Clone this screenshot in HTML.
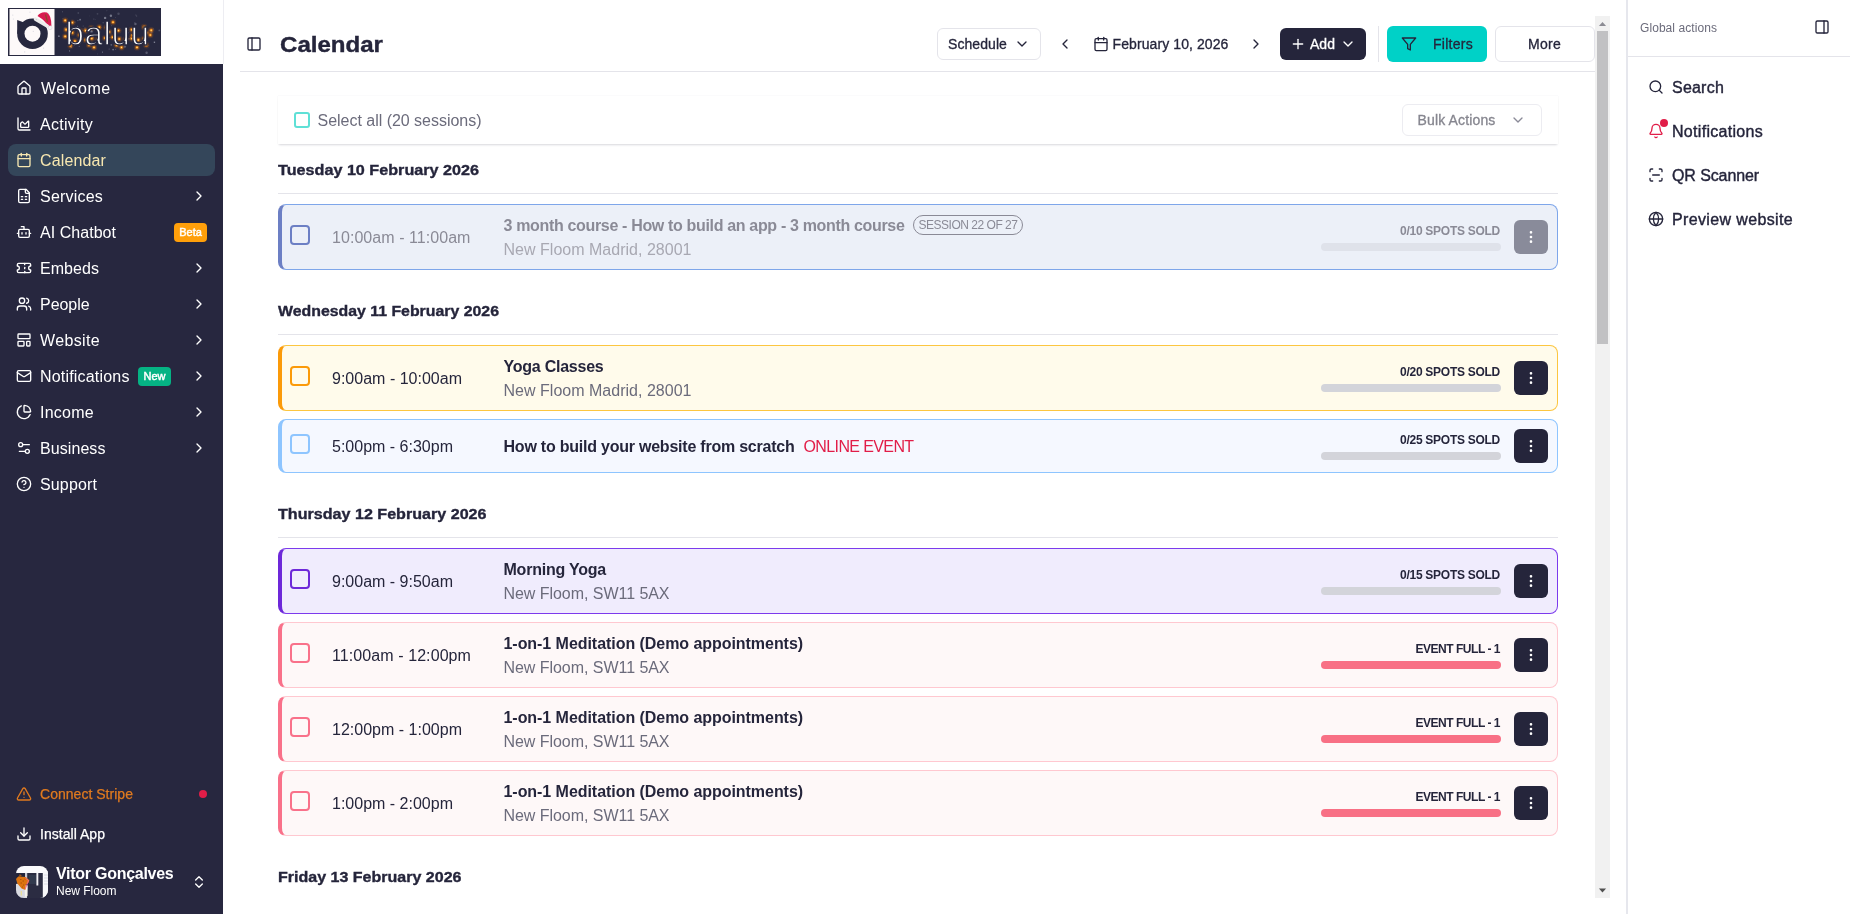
<!DOCTYPE html>
<html lang="en"><head><meta charset="utf-8"><title>Calendar</title>
<style>
html,body{margin:0;padding:0;background:#fff;}
body{width:1850px;height:914px;position:relative;overflow:hidden;font-family:"Liberation Sans", sans-serif;-webkit-font-smoothing:antialiased;}
#app{position:absolute;left:0;top:0;width:1850px;height:914px;will-change:transform;}
.b,.t,.i{position:absolute;box-sizing:border-box;}
.t{white-space:pre;}
.i{display:block;overflow:visible;}
</style></head><body>
<div id="app">
<div class="b" style="left:0px;top:64px;width:223px;height:850px;background:#27273f;"></div>
<div class="b" style="left:223px;top:0px;width:1px;height:64px;background:#ededf2;"></div>
<svg class="i" style="left:8px;top:8px" width="153" height="48" viewBox="0 0 153 48"><rect x="0" y="0" width="153" height="48" fill="#27283f"/><rect x="1.5" y="1" width="45" height="46" fill="#fdf9f9"/><path d="M9.2 12 L9.2 25.7 L24.5 25.7 L16 14.5Z" fill="#27283f"/><circle cx="24.5" cy="25.7" r="15.3" fill="#27283f"/><circle cx="24.5" cy="25.7" r="8" fill="#fdf9f9"/><path d="M29.5 8 Q33 3.2 39 4.6 Q43.5 7.5 43.4 18 L40.5 19 Q38 13 29.5 8Z" fill="#d81b50"/><path d="M37.5 6.5 L39.5 14" stroke="#8a4a2a" stroke-width="1.2" fill="none"/><path d="M27.6 11.2 L39.2 18" stroke="#ececec" stroke-width="3.6" stroke-linecap="round" fill="none"/><circle cx="42.1" cy="19.7" r="2" fill="#f6f6f6" stroke="#cfcfd6" stroke-width=".5"/><circle cx="81.7" cy="7.9" r="0.4" fill="#cfd3e0" opacity="0.18"/><circle cx="103.7" cy="17.8" r="0.4" fill="#cfd3e0" opacity="0.47"/><circle cx="70.3" cy="5.0" r="0.9" fill="#cfd3e0" opacity="0.17"/><circle cx="57.4" cy="20.5" r="1.2" fill="#cfd3e0" opacity="0.19"/><circle cx="71.2" cy="29.9" r="0.4" fill="#cfd3e0" opacity="0.35"/><circle cx="89.3" cy="45.9" r="0.4" fill="#cfd3e0" opacity="0.34"/><circle cx="61.9" cy="20.3" r="1.2" fill="#cfd3e0" opacity="0.19"/><circle cx="80.1" cy="38.5" r="0.5" fill="#cfd3e0" opacity="0.19"/><circle cx="107.4" cy="9.6" r="0.4" fill="#cfd3e0" opacity="0.34"/><circle cx="54.5" cy="3.7" r="0.5" fill="#cfd3e0" opacity="0.32"/><circle cx="103.3" cy="36.8" r="0.9" fill="#cfd3e0" opacity="0.35"/><circle cx="95.1" cy="14.8" r="0.5" fill="#cfd3e0" opacity="0.39"/><circle cx="73.4" cy="27.4" r="1.2" fill="#cfd3e0" opacity="0.32"/><circle cx="83.7" cy="21.6" r="1.2" fill="#cfd3e0" opacity="0.49"/><circle cx="60.3" cy="20.2" r="0.6" fill="#cfd3e0" opacity="0.20"/><circle cx="98.9" cy="2.8" r="0.4" fill="#cfd3e0" opacity="0.42"/><circle cx="107.6" cy="41.3" r="0.6" fill="#cfd3e0" opacity="0.27"/><circle cx="84.4" cy="23.8" r="0.9" fill="#cfd3e0" opacity="0.17"/><circle cx="57.7" cy="13.4" r="0.4" fill="#cfd3e0" opacity="0.17"/><circle cx="121.0" cy="30.8" r="0.9" fill="#cfd3e0" opacity="0.25"/><circle cx="88.1" cy="31.8" r="0.4" fill="#cfd3e0" opacity="0.48"/><circle cx="85.0" cy="29.1" r="0.9" fill="#cfd3e0" opacity="0.17"/><circle cx="127.9" cy="6.9" r="0.5" fill="#cfd3e0" opacity="0.29"/><circle cx="143.3" cy="23.8" r="0.5" fill="#cfd3e0" opacity="0.31"/><circle cx="105.1" cy="41.6" r="0.9" fill="#cfd3e0" opacity="0.45"/><circle cx="77.0" cy="20.1" r="0.6" fill="#cfd3e0" opacity="0.39"/><circle cx="87.6" cy="11.6" r="0.4" fill="#cfd3e0" opacity="0.21"/><circle cx="72.1" cy="11.7" r="0.9" fill="#cfd3e0" opacity="0.44"/><circle cx="67.0" cy="14.0" r="0.5" fill="#cfd3e0" opacity="0.30"/><circle cx="86.4" cy="27.1" r="0.5" fill="#cfd3e0" opacity="0.39"/><circle cx="101.6" cy="29.4" r="0.4" fill="#cfd3e0" opacity="0.31"/><circle cx="138.6" cy="44.8" r="1.2" fill="#cfd3e0" opacity="0.29"/><circle cx="89.5" cy="5.8" r="0.9" fill="#cfd3e0" opacity="0.17"/><circle cx="55.0" cy="10.6" r="0.5" fill="#cfd3e0" opacity="0.19"/><circle cx="110.5" cy="5.7" r="1.2" fill="#cfd3e0" opacity="0.20"/><circle cx="58.6" cy="17.7" r="0.4" fill="#cfd3e0" opacity="0.17"/><circle cx="69.6" cy="18.3" r="0.6" fill="#cfd3e0" opacity="0.48"/><circle cx="110.6" cy="22.8" r="0.4" fill="#cfd3e0" opacity="0.45"/><circle cx="151.3" cy="22.4" r="0.9" fill="#cfd3e0" opacity="0.26"/><circle cx="63.0" cy="35.5" r="0.6" fill="#cfd3e0" opacity="0.32"/><circle cx="120.0" cy="24.8" r="0.5" fill="#cfd3e0" opacity="0.48"/><circle cx="102.9" cy="7.7" r="1.2" fill="#cfd3e0" opacity="0.47"/><circle cx="126.8" cy="14.7" r="0.4" fill="#cfd3e0" opacity="0.39"/><circle cx="75.2" cy="17.9" r="0.5" fill="#cfd3e0" opacity="0.27"/><circle cx="71.2" cy="25.9" r="1.2" fill="#cfd3e0" opacity="0.27"/><circle cx="71.2" cy="38.3" r="0.5" fill="#cfd3e0" opacity="0.43"/><circle cx="133.1" cy="35.0" r="0.5" fill="#cfd3e0" opacity="0.22"/><circle cx="99.2" cy="34.6" r="0.4" fill="#cfd3e0" opacity="0.43"/><circle cx="97.1" cy="9.9" r="1.2" fill="#cfd3e0" opacity="0.48"/><circle cx="94.5" cy="44.1" r="0.6" fill="#cfd3e0" opacity="0.48"/><circle cx="85.9" cy="11.1" r="0.5" fill="#cfd3e0" opacity="0.31"/><circle cx="83.1" cy="23.2" r="1.2" fill="#cfd3e0" opacity="0.44"/><circle cx="97.9" cy="31.0" r="0.4" fill="#cfd3e0" opacity="0.44"/><circle cx="60.5" cy="18.9" r="0.5" fill="#cfd3e0" opacity="0.32"/><circle cx="66.6" cy="37.3" r="0.6" fill="#cfd3e0" opacity="0.18"/><circle cx="146.4" cy="34.2" r="0.9" fill="#cfd3e0" opacity="0.29"/><circle cx="146.5" cy="34.3" r="0.5" fill="#cfd3e0" opacity="0.50"/><circle cx="50.9" cy="28.2" r="0.9" fill="#cfd3e0" opacity="0.43"/><circle cx="63.2" cy="39.0" r="0.9" fill="#cfd3e0" opacity="0.38"/><circle cx="84.4" cy="26.2" r="0.5" fill="#cfd3e0" opacity="0.16"/><circle cx="131.1" cy="34.4" r="0.4" fill="#cfd3e0" opacity="0.33"/><circle cx="145.1" cy="21.0" r="0.5" fill="#cfd3e0" opacity="0.44"/><circle cx="69.9" cy="12.6" r="0.6" fill="#cfd3e0" opacity="0.33"/><circle cx="127.4" cy="16.0" r="1.2" fill="#cfd3e0" opacity="0.30"/><circle cx="61.6" cy="42.9" r="0.6" fill="#cfd3e0" opacity="0.46"/><circle cx="116.9" cy="38.5" r="1.2" fill="#cfd3e0" opacity="0.30"/><circle cx="143.4" cy="24.1" r="1.2" fill="#cfd3e0" opacity="0.20"/><circle cx="101.1" cy="41.1" r="0.5" fill="#cfd3e0" opacity="0.36"/><circle cx="128.7" cy="7.9" r="0.5" fill="#cfd3e0" opacity="0.32"/><circle cx="123.4" cy="26.6" r="0.6" fill="#cfd3e0" opacity="0.39"/><circle cx="25.3" cy="23.3" r=".6" fill="#b8bccb" opacity=".5"/><circle cx="35.6" cy="40.1" r=".6" fill="#b8bccb" opacity=".5"/><circle cx="5.4" cy="11.0" r=".6" fill="#b8bccb" opacity=".5"/><circle cx="4.8" cy="7.1" r=".6" fill="#b8bccb" opacity=".5"/><circle cx="22.0" cy="4.2" r=".6" fill="#b8bccb" opacity=".5"/><circle cx="40.5" cy="5.7" r=".6" fill="#b8bccb" opacity=".5"/><circle cx="16.7" cy="43.9" r=".6" fill="#b8bccb" opacity=".5"/><circle cx="28.5" cy="11.4" r=".6" fill="#b8bccb" opacity=".5"/><circle cx="57.2" cy="12.4" r="3.2" fill="#e8790c" opacity=".16"/><circle cx="57.2" cy="12.4" r="2" fill="#e8790c" opacity=".55"/><circle cx="57.2" cy="12.4" r="1.1" fill="#ff9d1e"/><circle cx="57.2" cy="12.4" r=".55" fill="#ffe7a3"/><circle cx="64.3" cy="14.6" r="3.2" fill="#e8790c" opacity=".16"/><circle cx="64.3" cy="14.6" r="2" fill="#e8790c" opacity=".55"/><circle cx="64.3" cy="14.6" r="1.1" fill="#ff9d1e"/><circle cx="64.3" cy="14.6" r=".55" fill="#ffe7a3"/><circle cx="58.1" cy="21.7" r="3.2" fill="#e8790c" opacity=".16"/><circle cx="58.1" cy="21.7" r="2" fill="#e8790c" opacity=".55"/><circle cx="58.1" cy="21.7" r="1.1" fill="#ff9d1e"/><circle cx="58.1" cy="21.7" r=".55" fill="#ffe7a3"/><circle cx="64.3" cy="24.8" r="3.2" fill="#e8790c" opacity=".16"/><circle cx="64.3" cy="24.8" r="2" fill="#e8790c" opacity=".55"/><circle cx="64.3" cy="24.8" r="1.1" fill="#ff9d1e"/><circle cx="64.3" cy="24.8" r=".55" fill="#ffe7a3"/><circle cx="57.2" cy="28.4" r="3.2" fill="#e8790c" opacity=".16"/><circle cx="57.2" cy="28.4" r="2" fill="#e8790c" opacity=".55"/><circle cx="57.2" cy="28.4" r="1.1" fill="#ff9d1e"/><circle cx="57.2" cy="28.4" r=".55" fill="#ffe7a3"/><circle cx="66.9" cy="33.2" r="3.2" fill="#e8790c" opacity=".16"/><circle cx="66.9" cy="33.2" r="2" fill="#e8790c" opacity=".55"/><circle cx="66.9" cy="33.2" r="1.1" fill="#ff9d1e"/><circle cx="66.9" cy="33.2" r=".55" fill="#ffe7a3"/><circle cx="62.5" cy="37.7" r="3.2" fill="#e8790c" opacity=".16"/><circle cx="62.5" cy="37.7" r="2" fill="#e8790c" opacity=".55"/><circle cx="62.5" cy="37.7" r="1.1" fill="#ff9d1e"/><circle cx="62.5" cy="37.7" r=".55" fill="#ffe7a3"/><circle cx="71.4" cy="27.0" r="3.2" fill="#e8790c" opacity=".16"/><circle cx="71.4" cy="27.0" r="2" fill="#e8790c" opacity=".55"/><circle cx="71.4" cy="27.0" r="1.1" fill="#ff9d1e"/><circle cx="71.4" cy="27.0" r=".55" fill="#ffe7a3"/><circle cx="77.6" cy="22.6" r="3.2" fill="#e8790c" opacity=".16"/><circle cx="77.6" cy="22.6" r="2" fill="#e8790c" opacity=".55"/><circle cx="77.6" cy="22.6" r="1.1" fill="#ff9d1e"/><circle cx="77.6" cy="22.6" r=".55" fill="#ffe7a3"/><circle cx="83.3" cy="19.9" r="3.2" fill="#e8790c" opacity=".16"/><circle cx="83.3" cy="19.9" r="2" fill="#e8790c" opacity=".55"/><circle cx="83.3" cy="19.9" r="1.1" fill="#ff9d1e"/><circle cx="83.3" cy="19.9" r=".55" fill="#ffe7a3"/><circle cx="91.3" cy="19.2" r="3.2" fill="#e8790c" opacity=".16"/><circle cx="91.3" cy="19.2" r="2" fill="#e8790c" opacity=".55"/><circle cx="91.3" cy="19.2" r="1.1" fill="#ff9d1e"/><circle cx="91.3" cy="19.2" r=".55" fill="#ffe7a3"/><circle cx="98.4" cy="19.5" r="3.2" fill="#e8790c" opacity=".16"/><circle cx="98.4" cy="19.5" r="2" fill="#e8790c" opacity=".55"/><circle cx="98.4" cy="19.5" r="1.1" fill="#ff9d1e"/><circle cx="98.4" cy="19.5" r=".55" fill="#ffe7a3"/><circle cx="105.0" cy="14.2" r="3.2" fill="#e8790c" opacity=".16"/><circle cx="105.0" cy="14.2" r="2" fill="#e8790c" opacity=".55"/><circle cx="105.0" cy="14.2" r="1.1" fill="#ff9d1e"/><circle cx="105.0" cy="14.2" r=".55" fill="#ffe7a3"/><circle cx="101.1" cy="23.9" r="3.2" fill="#e8790c" opacity=".16"/><circle cx="101.1" cy="23.9" r="2" fill="#e8790c" opacity=".55"/><circle cx="101.1" cy="23.9" r="1.1" fill="#ff9d1e"/><circle cx="101.1" cy="23.9" r=".55" fill="#ffe7a3"/><circle cx="104.6" cy="29.2" r="3.2" fill="#e8790c" opacity=".16"/><circle cx="104.6" cy="29.2" r="2" fill="#e8790c" opacity=".55"/><circle cx="104.6" cy="29.2" r="1.1" fill="#ff9d1e"/><circle cx="104.6" cy="29.2" r=".55" fill="#ffe7a3"/><circle cx="97.1" cy="30.1" r="3.2" fill="#e8790c" opacity=".16"/><circle cx="97.1" cy="30.1" r="2" fill="#e8790c" opacity=".55"/><circle cx="97.1" cy="30.1" r="1.1" fill="#ff9d1e"/><circle cx="97.1" cy="30.1" r=".55" fill="#ffe7a3"/><circle cx="83.8" cy="30.6" r="3.2" fill="#e8790c" opacity=".16"/><circle cx="83.8" cy="30.6" r="2" fill="#e8790c" opacity=".55"/><circle cx="83.8" cy="30.6" r="1.1" fill="#ff9d1e"/><circle cx="83.8" cy="30.6" r=".55" fill="#ffe7a3"/><circle cx="90.0" cy="31.5" r="3.2" fill="#e8790c" opacity=".16"/><circle cx="90.0" cy="31.5" r="2" fill="#e8790c" opacity=".55"/><circle cx="90.0" cy="31.5" r="1.1" fill="#ff9d1e"/><circle cx="90.0" cy="31.5" r=".55" fill="#ffe7a3"/><circle cx="77.6" cy="31.9" r="3.2" fill="#e8790c" opacity=".16"/><circle cx="77.6" cy="31.9" r="2" fill="#e8790c" opacity=".55"/><circle cx="77.6" cy="31.9" r="1.1" fill="#ff9d1e"/><circle cx="77.6" cy="31.9" r=".55" fill="#ffe7a3"/><circle cx="81.1" cy="37.0" r="3.2" fill="#e8790c" opacity=".16"/><circle cx="81.1" cy="37.0" r="2" fill="#e8790c" opacity=".55"/><circle cx="81.1" cy="37.0" r="1.1" fill="#ff9d1e"/><circle cx="81.1" cy="37.0" r=".55" fill="#ffe7a3"/><circle cx="86.0" cy="39.4" r="3.2" fill="#e8790c" opacity=".16"/><circle cx="86.0" cy="39.4" r="2" fill="#e8790c" opacity=".55"/><circle cx="86.0" cy="39.4" r="1.1" fill="#ff9d1e"/><circle cx="86.0" cy="39.4" r=".55" fill="#ffe7a3"/><circle cx="111.2" cy="31.0" r="3.2" fill="#e8790c" opacity=".16"/><circle cx="111.2" cy="31.0" r="2" fill="#e8790c" opacity=".55"/><circle cx="111.2" cy="31.0" r="1.1" fill="#ff9d1e"/><circle cx="111.2" cy="31.0" r=".55" fill="#ffe7a3"/><circle cx="113.5" cy="39.4" r="3.2" fill="#e8790c" opacity=".16"/><circle cx="113.5" cy="39.4" r="2" fill="#e8790c" opacity=".55"/><circle cx="113.5" cy="39.4" r="1.1" fill="#ff9d1e"/><circle cx="113.5" cy="39.4" r=".55" fill="#ffe7a3"/><circle cx="123.7" cy="21.7" r="3.2" fill="#e8790c" opacity=".16"/><circle cx="123.7" cy="21.7" r="2" fill="#e8790c" opacity=".55"/><circle cx="123.7" cy="21.7" r="1.1" fill="#ff9d1e"/><circle cx="123.7" cy="21.7" r=".55" fill="#ffe7a3"/><circle cx="124.5" cy="27.5" r="3.2" fill="#e8790c" opacity=".16"/><circle cx="124.5" cy="27.5" r="2" fill="#e8790c" opacity=".55"/><circle cx="124.5" cy="27.5" r="1.1" fill="#ff9d1e"/><circle cx="124.5" cy="27.5" r=".55" fill="#ffe7a3"/><circle cx="123.7" cy="30.6" r="3.2" fill="#e8790c" opacity=".16"/><circle cx="123.7" cy="30.6" r="2" fill="#e8790c" opacity=".55"/><circle cx="123.7" cy="30.6" r="1.1" fill="#ff9d1e"/><circle cx="123.7" cy="30.6" r=".55" fill="#ffe7a3"/><circle cx="130.3" cy="31.9" r="3.2" fill="#e8790c" opacity=".16"/><circle cx="130.3" cy="31.9" r="2" fill="#e8790c" opacity=".55"/><circle cx="130.3" cy="31.9" r="1.1" fill="#ff9d1e"/><circle cx="130.3" cy="31.9" r=".55" fill="#ffe7a3"/><circle cx="138.7" cy="24.8" r="3.2" fill="#e8790c" opacity=".16"/><circle cx="138.7" cy="24.8" r="2" fill="#e8790c" opacity=".55"/><circle cx="138.7" cy="24.8" r="1.1" fill="#ff9d1e"/><circle cx="138.7" cy="24.8" r=".55" fill="#ffe7a3"/><circle cx="143.2" cy="22.2" r="3.2" fill="#e8790c" opacity=".16"/><circle cx="143.2" cy="22.2" r="2" fill="#e8790c" opacity=".55"/><circle cx="143.2" cy="22.2" r="1.1" fill="#ff9d1e"/><circle cx="143.2" cy="22.2" r=".55" fill="#ffe7a3"/><circle cx="138.3" cy="37.2" r="3.2" fill="#e8790c" opacity=".16"/><circle cx="138.3" cy="37.2" r="2" fill="#e8790c" opacity=".55"/><circle cx="138.3" cy="37.2" r="1.1" fill="#ff9d1e"/><circle cx="138.3" cy="37.2" r=".55" fill="#ffe7a3"/><circle cx="129.0" cy="39.4" r="3.2" fill="#e8790c" opacity=".16"/><circle cx="129.0" cy="39.4" r="2" fill="#e8790c" opacity=".55"/><circle cx="129.0" cy="39.4" r="1.1" fill="#ff9d1e"/><circle cx="129.0" cy="39.4" r=".55" fill="#ffe7a3"/><circle cx="108.6" cy="37.2" r="3.2" fill="#e8790c" opacity=".16"/><circle cx="108.6" cy="37.2" r="2" fill="#e8790c" opacity=".55"/><circle cx="108.6" cy="37.2" r="1.1" fill="#ff9d1e"/><circle cx="108.6" cy="37.2" r=".55" fill="#ffe7a3"/><circle cx="136.1" cy="30.6" r="3.2" fill="#e8790c" opacity=".16"/><circle cx="136.1" cy="30.6" r="2" fill="#e8790c" opacity=".55"/><circle cx="136.1" cy="30.6" r="1.1" fill="#ff9d1e"/><circle cx="136.1" cy="30.6" r=".55" fill="#ffe7a3"/><circle cx="117.5" cy="31.5" r="3.2" fill="#e8790c" opacity=".16"/><circle cx="117.5" cy="31.5" r="2" fill="#e8790c" opacity=".55"/><circle cx="117.5" cy="31.5" r="1.1" fill="#ff9d1e"/><circle cx="117.5" cy="31.5" r=".55" fill="#ffe7a3"/><circle cx="142.3" cy="27.0" r="3.2" fill="#e8790c" opacity=".16"/><circle cx="142.3" cy="27.0" r="2" fill="#e8790c" opacity=".55"/><circle cx="142.3" cy="27.0" r="1.1" fill="#ff9d1e"/><circle cx="142.3" cy="27.0" r=".55" fill="#ffe7a3"/><circle cx="136.1" cy="19.0" r="3.2" fill="#e8790c" opacity=".16"/><circle cx="136.1" cy="19.0" r="2" fill="#e8790c" opacity=".55"/><circle cx="136.1" cy="19.0" r="1.1" fill="#ff9d1e"/><circle cx="136.1" cy="19.0" r=".55" fill="#ffe7a3"/><circle cx="110.4" cy="22.6" r="3.2" fill="#e8790c" opacity=".16"/><circle cx="110.4" cy="22.6" r="2" fill="#e8790c" opacity=".55"/><circle cx="110.4" cy="22.6" r="1.1" fill="#ff9d1e"/><circle cx="110.4" cy="22.6" r=".55" fill="#ffe7a3"/><circle cx="72.2" cy="22.6" r="3.2" fill="#e8790c" opacity=".16"/><circle cx="72.2" cy="22.6" r="2" fill="#e8790c" opacity=".55"/><circle cx="72.2" cy="22.6" r="1.1" fill="#ff9d1e"/><circle cx="72.2" cy="22.6" r=".55" fill="#ffe7a3"/><text x="57.4" y="37" font-family="Liberation Sans, sans-serif" font-size="33" letter-spacing="0.9" fill="#ffffff" stroke="#27283f" stroke-width="1.35" paint-order="fill" opacity="0.99" textLength="84.5" lengthAdjust="spacing">baluu</text></svg>
<svg class="i" style="left:16px;top:80px;color:#fff;" width="16" height="16" viewBox="0 0 24 24" fill="none" stroke="currentColor" stroke-width="2" stroke-linecap="round" stroke-linejoin="round"><path d="M15 21v-8a1 1 0 0 0-1-1h-4a1 1 0 0 0-1 1v8"/><path d="M3 10a2 2 0 0 1 .709-1.528l7-5.999a2 2 0 0 1 2.582 0l7 5.999A2 2 0 0 1 21 10v9a2 2 0 0 1-2 2H5a2 2 0 0 1-2-2z"/></svg>
<span class="t" style="left:41px;top:77.0px;line-height:24px;font-size:16px;font-weight:400;color:#fff;letter-spacing:0.444px;">Welcome</span>
<svg class="i" style="left:16px;top:116px;color:#fff;" width="16" height="16" viewBox="0 0 24 24" fill="none" stroke="currentColor" stroke-width="2" stroke-linecap="round" stroke-linejoin="round"><path d="M3 3v16a2 2 0 0 0 2 2h16"/><path d="M7 11.207a.5.5 0 0 1 .146-.353l2-2a.5.5 0 0 1 .708 0l3.292 3.292a.5.5 0 0 0 .708 0l4.292-4.292a.5.5 0 0 1 .854.353V16a1 1 0 0 1-1 1H8a1 1 0 0 1-1-1z"/></svg>
<span class="t" style="left:40px;top:113.0px;line-height:24px;font-size:16px;font-weight:400;color:#fff;letter-spacing:0.291px;">Activity</span>
<div class="b" style="left:8px;top:144px;width:207px;height:32px;background:#34465a;border-radius:8px;"></div>
<svg class="i" style="left:16px;top:152px;color:#f7e7b0;" width="16" height="16" viewBox="0 0 24 24" fill="none" stroke="currentColor" stroke-width="2" stroke-linecap="round" stroke-linejoin="round"><path d="M8 2v4"/><path d="M16 2v4"/><rect width="18" height="18" x="3" y="4" rx="2"/><path d="M3 10h18"/></svg>
<span class="t" style="left:40px;top:149.0px;line-height:24px;font-size:16px;font-weight:400;color:#f7e7b0;letter-spacing:0.133px;">Calendar</span>
<svg class="i" style="left:16px;top:188px;color:#fff;" width="16" height="16" viewBox="0 0 24 24" fill="none" stroke="currentColor" stroke-width="2" stroke-linecap="round" stroke-linejoin="round"><path d="M15 2H6a2 2 0 0 0-2 2v16a2 2 0 0 0 2 2h12a2 2 0 0 0 2-2V7Z"/><path d="M14 2v4a2 2 0 0 0 2 2h4"/><path d="M8 13h2"/><path d="M14 13h2"/><path d="M8 17h2"/><path d="M14 17h2"/></svg>
<span class="t" style="left:40px;top:185.0px;line-height:24px;font-size:16px;font-weight:400;color:#fff;letter-spacing:0.205px;">Services</span>
<svg class="i" style="left:191px;top:188px;color:#fff;" width="16" height="16" viewBox="0 0 24 24" fill="none" stroke="currentColor" stroke-width="2" stroke-linecap="round" stroke-linejoin="round"><path d="m9 18 6-6-6-6"/></svg>
<svg class="i" style="left:16px;top:224px;color:#fff;" width="16" height="16" viewBox="0 0 24 24" fill="none" stroke="currentColor" stroke-width="2" stroke-linecap="round" stroke-linejoin="round"><path d="M12 8V4H8"/><rect width="16" height="12" x="4" y="8" rx="2"/><path d="M2 14h2"/><path d="M20 14h2"/><path d="M15 13v2"/><path d="M9 13v2"/></svg>
<span class="t" style="left:40px;top:221.0px;line-height:24px;font-size:16px;font-weight:400;color:#fff;letter-spacing:0.039px;">AI Chatbot</span>
<svg class="i" style="left:16px;top:260px;color:#fff;" width="16" height="16" viewBox="0 0 24 24" fill="none" stroke="currentColor" stroke-width="2" stroke-linecap="round" stroke-linejoin="round"><path d="M2 9a3 3 0 0 1 0 6v2a2 2 0 0 0 2 2h16a2 2 0 0 0 2-2v-2a3 3 0 0 1 0-6V7a2 2 0 0 0-2-2H4a2 2 0 0 0-2 2Z"/><path d="M13 5v2"/><path d="M13 17v2"/><path d="M13 11v2"/></svg>
<span class="t" style="left:40px;top:257.0px;line-height:24px;font-size:16px;font-weight:400;color:#fff;letter-spacing:0.049px;">Embeds</span>
<svg class="i" style="left:191px;top:260px;color:#fff;" width="16" height="16" viewBox="0 0 24 24" fill="none" stroke="currentColor" stroke-width="2" stroke-linecap="round" stroke-linejoin="round"><path d="m9 18 6-6-6-6"/></svg>
<svg class="i" style="left:16px;top:296px;color:#fff;" width="16" height="16" viewBox="0 0 24 24" fill="none" stroke="currentColor" stroke-width="2" stroke-linecap="round" stroke-linejoin="round"><path d="M16 21v-2a4 4 0 0 0-4-4H6a4 4 0 0 0-4 4v2"/><circle cx="9" cy="7" r="4"/><path d="M22 21v-2a4 4 0 0 0-3-3.87"/><path d="M16 3.13a4 4 0 0 1 0 7.75"/></svg>
<span class="t" style="left:40px;top:293.0px;line-height:24px;font-size:16px;font-weight:400;color:#fff;letter-spacing:-0.038px;">People</span>
<svg class="i" style="left:191px;top:296px;color:#fff;" width="16" height="16" viewBox="0 0 24 24" fill="none" stroke="currentColor" stroke-width="2" stroke-linecap="round" stroke-linejoin="round"><path d="m9 18 6-6-6-6"/></svg>
<svg class="i" style="left:16px;top:332px;color:#fff;" width="16" height="16" viewBox="0 0 24 24" fill="none" stroke="currentColor" stroke-width="2" stroke-linecap="round" stroke-linejoin="round"><rect width="18" height="7" x="3" y="3" rx="1"/><rect width="9" height="7" x="3" y="14" rx="1"/><rect width="5" height="7" x="16" y="14" rx="1"/></svg>
<span class="t" style="left:40px;top:329.0px;line-height:24px;font-size:16px;font-weight:400;color:#fff;letter-spacing:0.355px;">Website</span>
<svg class="i" style="left:191px;top:332px;color:#fff;" width="16" height="16" viewBox="0 0 24 24" fill="none" stroke="currentColor" stroke-width="2" stroke-linecap="round" stroke-linejoin="round"><path d="m9 18 6-6-6-6"/></svg>
<svg class="i" style="left:16px;top:368px;color:#fff;" width="16" height="16" viewBox="0 0 24 24" fill="none" stroke="currentColor" stroke-width="2" stroke-linecap="round" stroke-linejoin="round"><rect width="20" height="16" x="2" y="4" rx="2"/><path d="m22 7-8.97 5.7a1.94 1.94 0 0 1-2.06 0L2 7"/></svg>
<span class="t" style="left:40px;top:365.0px;line-height:24px;font-size:16px;font-weight:400;color:#fff;letter-spacing:0.188px;">Notifications</span>
<svg class="i" style="left:191px;top:368px;color:#fff;" width="16" height="16" viewBox="0 0 24 24" fill="none" stroke="currentColor" stroke-width="2" stroke-linecap="round" stroke-linejoin="round"><path d="m9 18 6-6-6-6"/></svg>
<svg class="i" style="left:16px;top:404px;color:#fff;" width="16" height="16" viewBox="0 0 24 24" fill="none" stroke="currentColor" stroke-width="2" stroke-linecap="round" stroke-linejoin="round"><path d="M21 12c.552 0 1.005-.449.95-.998a10 10 0 0 0-8.953-8.951c-.55-.055-.998.398-.998.95v8a1 1 0 0 0 1 1z"/><path d="M21.21 15.89A10 10 0 1 1 8 2.83"/></svg>
<span class="t" style="left:40px;top:401.0px;line-height:24px;font-size:16px;font-weight:400;color:#fff;letter-spacing:0.255px;">Income</span>
<svg class="i" style="left:191px;top:404px;color:#fff;" width="16" height="16" viewBox="0 0 24 24" fill="none" stroke="currentColor" stroke-width="2" stroke-linecap="round" stroke-linejoin="round"><path d="m9 18 6-6-6-6"/></svg>
<svg class="i" style="left:16px;top:440px;color:#fff;" width="16" height="16" viewBox="0 0 24 24" fill="none" stroke="currentColor" stroke-width="2" stroke-linecap="round" stroke-linejoin="round"><path d="M20 7h-9"/><path d="M14 17H5"/><circle cx="17" cy="17" r="3"/><circle cx="7" cy="7" r="3"/></svg>
<span class="t" style="left:40px;top:437.0px;line-height:24px;font-size:16px;font-weight:400;color:#fff;letter-spacing:0.072px;">Business</span>
<svg class="i" style="left:191px;top:440px;color:#fff;" width="16" height="16" viewBox="0 0 24 24" fill="none" stroke="currentColor" stroke-width="2" stroke-linecap="round" stroke-linejoin="round"><path d="m9 18 6-6-6-6"/></svg>
<svg class="i" style="left:16px;top:476px;color:#fff;" width="16" height="16" viewBox="0 0 24 24" fill="none" stroke="currentColor" stroke-width="2" stroke-linecap="round" stroke-linejoin="round"><circle cx="12" cy="12" r="10"/><path d="M9.09 9a3 3 0 0 1 5.83 1c0 2-3 3-3 3"/><path d="M12 17h.01"/></svg>
<span class="t" style="left:40px;top:473.0px;line-height:24px;font-size:16px;font-weight:400;color:#fff;letter-spacing:0.136px;">Support</span>
<div class="b" style="left:174px;top:223px;width:33px;height:19px;background:#ff9f0a;border-radius:4px;"></div>
<span class="t" style="left:190.5px;top:223.0px;line-height:19px;font-size:11px;font-weight:400;color:#fff;letter-spacing:normal;transform:translateX(-50%);-webkit-text-stroke:0.45px currentColor;">Beta</span>
<div class="b" style="left:138px;top:367px;width:33px;height:19px;background:#05b384;border-radius:4px;"></div>
<span class="t" style="left:154.5px;top:367.0px;line-height:19px;font-size:11px;font-weight:400;color:#fff;letter-spacing:normal;transform:translateX(-50%);-webkit-text-stroke:0.45px currentColor;">New</span>
<svg class="i" style="left:16px;top:786px;color:#e07a1f;" width="16" height="16" viewBox="0 0 24 24" fill="none" stroke="currentColor" stroke-width="2" stroke-linecap="round" stroke-linejoin="round"><path d="m21.73 18-8-14a2 2 0 0 0-3.48 0l-8 14A2 2 0 0 0 4 21h16a2 2 0 0 0 1.73-3"/><path d="M12 9v4"/><path d="M12 17h.01"/></svg>
<span class="t" style="left:40px;top:783.5px;line-height:21px;font-size:14px;font-weight:400;color:#e07a1f;letter-spacing:0.028px;-webkit-text-stroke:0.25px currentColor;">Connect Stripe</span>
<div class="b" style="left:199px;top:790px;width:8px;height:8px;background:#e11d48;border-radius:50%;"></div>
<svg class="i" style="left:16px;top:826px;color:#fff;" width="16" height="16" viewBox="0 0 24 24" fill="none" stroke="currentColor" stroke-width="2" stroke-linecap="round" stroke-linejoin="round"><path d="M21 15v4a2 2 0 0 1-2 2H5a2 2 0 0 1-2-2v-4"/><path d="m7 10 5 5 5-5"/><path d="M12 15V3"/></svg>
<span class="t" style="left:40px;top:823.5px;line-height:21px;font-size:14px;font-weight:400;color:#fff;letter-spacing:0.036px;-webkit-text-stroke:0.25px currentColor;">Install App</span>
<svg class="i" style="left:16px;top:866px;border-radius:8px;overflow:hidden" width="32" height="32" viewBox="0 0 32 32"><rect width="32" height="32" fill="#fbfbfd"/><rect x="0" y="7" width="27" height="25" fill="#2b2c42"/><rect x="0" y="7.5" width="9" height="4" fill="#23243a"/><rect x="9" y="7" width="2.2" height="10" fill="#c9cad3"/><rect x="20.4" y="7" width="1.9" height="12.5" fill="#f1f1f5"/><rect x="13" y="9" width="7" height="9" fill="#323a4e"/><rect x="26.8" y="5" width="5.2" height="27" fill="#f7f7fa"/><path d="M28 9h4M28 12h4M28 15h4M28 18h4" stroke="#d4d6df" stroke-width=".8"/><path d="M0 18 L6 17 L11.5 20 L11 32 L0 32Z" fill="#d9dae1"/><path d="M8.5 20 L11.5 19 L11.5 30 L9 31Z" fill="#f7f4ea"/><path d="M2.2 10.6 L9.8 11 L13.4 14.2 L12.4 17 L9.8 18.6 L9.4 24 L5.6 22.4 L1.4 17.5 L0 13Z" fill="#dd7410"/><path d="M3 9.2h2v1M3 11h1.6" stroke="#dd7410" stroke-width=".8" fill="none"/><path d="M4 13.5h1.5M6.5 15h1.5M4.5 17h1.5M7 19h1.2M8.5 13h1.2M6 21h1" stroke="#a85208" stroke-width=".9"/><path d="M9.3 12 L12.5 14.5 L9.2 23" stroke="#f2688a" stroke-width="1" fill="none"/><rect x="4.8" y="25" width=".9" height="4.5" fill="#f3e27a"/></svg>
<span class="t" style="left:56px;top:864.0px;line-height:20px;font-size:16px;font-weight:700;color:#fff;letter-spacing:-0.269px;">Vitor Gonçalves</span>
<span class="t" style="left:56px;top:882.5px;line-height:16px;font-size:12px;font-weight:400;color:#fff;letter-spacing:-0.021px;">New Floom</span>
<svg class="i" style="left:191px;top:874px;color:#fff;" width="16" height="16" viewBox="0 0 24 24" fill="none" stroke="currentColor" stroke-width="2" stroke-linecap="round" stroke-linejoin="round"><path d="m7 15 5 5 5-5"/><path d="m7 9 5-5 5 5"/></svg>
<div class="b" style="left:240px;top:71px;width:1356px;height:1px;background:#e4e4ea;"></div>
<svg class="i" style="left:246px;top:36px;color:#25253b;" width="16" height="16" viewBox="0 0 24 24" fill="none" stroke="currentColor" stroke-width="2" stroke-linecap="round" stroke-linejoin="round"><rect width="18" height="18" x="3" y="3" rx="2"/><path d="M9 3v18"/></svg>
<span class="t" style="left:280px;top:29.3px;line-height:32px;font-size:22.5px;font-weight:700;color:#25253b;letter-spacing:normal;-webkit-text-stroke:0.4px currentColor;transform-origin:left center;transform:scaleX(1.0696);">Calendar</span>
<div class="b" style="left:937px;top:28px;width:104px;height:32px;border:1px solid #e4e4ea;border-radius:6px;background:#fff;"></div>
<span class="t" style="left:948px;top:33.5px;line-height:21px;font-size:14px;font-weight:400;color:#25253b;letter-spacing:0.076px;-webkit-text-stroke:0.3px currentColor;">Schedule</span>
<svg class="i" style="left:1014px;top:36px;color:#25253b;" width="16" height="16" viewBox="0 0 24 24" fill="none" stroke="currentColor" stroke-width="2" stroke-linecap="round" stroke-linejoin="round"><path d="m6 9 6 6 6-6"/></svg>
<svg class="i" style="left:1057px;top:36px;color:#25253b;" width="16" height="16" viewBox="0 0 24 24" fill="none" stroke="currentColor" stroke-width="2" stroke-linecap="round" stroke-linejoin="round"><path d="m15 18-6-6 6-6"/></svg>
<svg class="i" style="left:1093px;top:36px;color:#25253b;" width="16" height="16" viewBox="0 0 24 24" fill="none" stroke="currentColor" stroke-width="2" stroke-linecap="round" stroke-linejoin="round"><path d="M8 2v4"/><path d="M16 2v4"/><rect width="18" height="18" x="3" y="4" rx="2"/><path d="M3 10h18"/></svg>
<span class="t" style="left:1112.5px;top:33.5px;line-height:21px;font-size:14px;font-weight:400;color:#25253b;letter-spacing:0.094px;-webkit-text-stroke:0.3px currentColor;">February 10, 2026</span>
<svg class="i" style="left:1248px;top:36px;color:#25253b;" width="16" height="16" viewBox="0 0 24 24" fill="none" stroke="currentColor" stroke-width="2" stroke-linecap="round" stroke-linejoin="round"><path d="m9 18 6-6-6-6"/></svg>
<div class="b" style="left:1280px;top:28px;width:86px;height:32px;background:#25253b;border-radius:6px;"></div>
<svg class="i" style="left:1290px;top:36px;color:#fff;" width="16" height="16" viewBox="0 0 24 24" fill="none" stroke="currentColor" stroke-width="2" stroke-linecap="round" stroke-linejoin="round"><path d="M5 12h14"/><path d="M12 5v14"/></svg>
<span class="t" style="left:1310px;top:33.5px;line-height:21px;font-size:14px;font-weight:400;color:#fff;letter-spacing:0.026px;-webkit-text-stroke:0.3px currentColor;">Add</span>
<svg class="i" style="left:1340px;top:36px;color:#fff;" width="16" height="16" viewBox="0 0 24 24" fill="none" stroke="currentColor" stroke-width="2" stroke-linecap="round" stroke-linejoin="round"><path d="m6 9 6 6 6-6"/></svg>
<div class="b" style="left:1378px;top:26px;width:1px;height:36px;background:#e4e4ea;"></div>
<div class="b" style="left:1387px;top:26px;width:100px;height:36px;background:#00d1c7;border-radius:6px;"></div>
<svg class="i" style="left:1401px;top:36px;color:#25253b;" width="16" height="16" viewBox="0 0 24 24" fill="none" stroke="currentColor" stroke-width="2" stroke-linecap="round" stroke-linejoin="round"><path d="M22 3H2l8 9.46V19l4 2v-8.54z"/></svg>
<span class="t" style="left:1433px;top:33.5px;line-height:21px;font-size:14px;font-weight:400;color:#25253b;letter-spacing:0.268px;-webkit-text-stroke:0.3px currentColor;">Filters</span>
<div class="b" style="left:1495px;top:26px;width:100px;height:36px;border:1px solid #e4e4ea;border-radius:6px;background:#fff;"></div>
<span class="t" style="left:1528px;top:33.5px;line-height:21px;font-size:14px;font-weight:400;color:#25253b;letter-spacing:0.273px;-webkit-text-stroke:0.3px currentColor;">More</span>
<div class="b" style="left:1595px;top:16px;width:15px;height:882px;background:#f1f1f1;"></div>
<div class="b" style="left:1597px;top:31px;width:11px;height:313px;background:#c1c1c3;"></div>
<svg class="i" style="left:1595px;top:16px" width="15" height="15" viewBox="0 0 15 15"><path d="M3.9 10 L7.5 5.9 L11.1 10Z" fill="#8b8b93"/></svg>
<svg class="i" style="left:1595px;top:883px" width="15" height="15" viewBox="0 0 15 15"><path d="M3.9 5.5 L7.5 9.6 L11.1 5.5Z" fill="#505050"/></svg>
<div class="b" style="left:1626px;top:0px;width:2px;height:914px;background:#e6e7ed;"></div>
<div class="b" style="left:1628px;top:56px;width:222px;height:1px;background:#e4e4ea;"></div>
<span class="t" style="left:1640px;top:19.0px;line-height:18px;font-size:12px;font-weight:400;color:#6b6b7b;letter-spacing:0.068px;">Global actions</span>
<svg class="i" style="left:1814px;top:19px;color:#25253b;" width="16" height="16" viewBox="0 0 24 24" fill="none" stroke="currentColor" stroke-width="2" stroke-linecap="round" stroke-linejoin="round"><rect width="18" height="18" x="3" y="3" rx="2"/><path d="M15 3v18"/></svg>
<svg class="i" style="left:1648px;top:79px;color:#25253b;" width="16" height="16" viewBox="0 0 24 24" fill="none" stroke="currentColor" stroke-width="2" stroke-linecap="round" stroke-linejoin="round"><circle cx="11" cy="11" r="8"/><path d="m21 21-4.3-4.3"/></svg>
<span class="t" style="left:1672px;top:76.0px;line-height:24px;font-size:16px;font-weight:400;color:#25253b;letter-spacing:0.216px;-webkit-text-stroke:0.4px currentColor;">Search</span>
<svg class="i" style="left:1648px;top:123px;color:#e11d48;" width="16" height="16" viewBox="0 0 24 24" fill="none" stroke="currentColor" stroke-width="2" stroke-linecap="round" stroke-linejoin="round"><path d="M10.268 21a2 2 0 0 0 3.464 0"/><path d="M3.262 15.326A1 1 0 0 0 4 17h16a1 1 0 0 0 .74-1.673C19.41 13.956 18 12.499 18 8A6 6 0 0 0 6 8c0 4.499-1.411 5.956-2.738 7.326"/></svg>
<span class="t" style="left:1672px;top:120.0px;line-height:24px;font-size:16px;font-weight:400;color:#25253b;letter-spacing:0.296px;-webkit-text-stroke:0.4px currentColor;">Notifications</span>
<svg class="i" style="left:1648px;top:167px;color:#25253b;" width="16" height="16" viewBox="0 0 24 24" fill="none" stroke="currentColor" stroke-width="2" stroke-linecap="round" stroke-linejoin="round"><path d="M3 7V5a2 2 0 0 1 2-2h2"/><path d="M17 3h2a2 2 0 0 1 2 2v2"/><path d="M21 17v2a2 2 0 0 1-2 2h-2"/><path d="M7 21H5a2 2 0 0 1-2-2v-2"/><path d="M7 12h10"/></svg>
<span class="t" style="left:1672px;top:164.0px;line-height:24px;font-size:16px;font-weight:400;color:#25253b;letter-spacing:-0.105px;-webkit-text-stroke:0.4px currentColor;">QR Scanner</span>
<svg class="i" style="left:1648px;top:211px;color:#25253b;" width="16" height="16" viewBox="0 0 24 24" fill="none" stroke="currentColor" stroke-width="2" stroke-linecap="round" stroke-linejoin="round"><circle cx="12" cy="12" r="10"/><path d="M12 2a14.5 14.5 0 0 0 0 20 14.5 14.5 0 0 0 0-20"/><path d="M2 12h20"/></svg>
<span class="t" style="left:1672px;top:208.0px;line-height:24px;font-size:16px;font-weight:400;color:#25253b;letter-spacing:0.359px;-webkit-text-stroke:0.4px currentColor;">Preview website</span>
<div class="b" style="left:1660px;top:118.5px;width:8px;height:8px;background:#e11d48;border-radius:50%;"></div>
<div class="b" style="left:278px;top:96px;width:1280px;height:48px;background:#fff;box-shadow:0 2px 2px -1px rgba(30,30,60,.16),0 0 1px rgba(30,30,60,.10);"></div>
<div class="b" style="left:294px;top:112px;width:16px;height:16px;border:2px solid #5fe0d6;border-radius:3px;background:#fff;"></div>
<span class="t" style="left:317.5px;top:109.0px;line-height:24px;font-size:16px;font-weight:400;color:#6b6b7b;letter-spacing:-0.021px;">Select all (20 sessions)</span>
<div class="b" style="left:1402px;top:104px;width:139.5px;height:32px;border:1px solid #ececf1;border-radius:6px;background:#fff;"></div>
<span class="t" style="left:1417.5px;top:109.5px;line-height:21px;font-size:14px;font-weight:400;color:#86868f;letter-spacing:0.145px;-webkit-text-stroke:0.3px currentColor;">Bulk Actions</span>
<svg class="i" style="left:1510px;top:112px;color:#8a8a98;" width="16" height="16" viewBox="0 0 24 24" fill="none" stroke="currentColor" stroke-width="2" stroke-linecap="round" stroke-linejoin="round"><path d="m6 9 6 6 6-6"/></svg>
<span class="t" style="left:278px;top:158.1px;line-height:24px;font-size:15px;font-weight:700;color:#25253b;letter-spacing:normal;-webkit-text-stroke:0.35px currentColor;transform-origin:left center;transform:scaleX(1.0777);">Tuesday 10 February 2026</span>
<div class="b" style="left:278px;top:193px;width:1280px;height:1px;background:#e4e4ea;"></div>
<div class="b" style="left:278px;top:204px;width:1280px;height:66px;background:#ecf0f8;border:1px solid #7ea6ea;border-left:4px solid #6c7fc4;border-radius:8px;"></div>
<div class="b" style="left:290px;top:225.0px;width:20px;height:20px;border:2px solid #6c7fc4;border-radius:4px;"></div>
<span class="t" style="left:332px;top:225.5px;line-height:24px;font-size:16px;font-weight:400;color:#8a8a96;letter-spacing:0.055px;">10:00am - 11:00am</span>
<span class="t" style="left:503.5px;top:214.0px;line-height:24px;font-size:16px;font-weight:700;color:#8a8a96;letter-spacing:-0.334px;">3 month course - How to build an app - 3 month course</span>
<span class="t" style="left:503.5px;top:238.0px;line-height:24px;font-size:16px;font-weight:400;color:#a8a8b2;letter-spacing:0.016px;">New Floom Madrid, 28001</span>
<span class="t" style="right:350px;top:222.0px;line-height:18px;font-size:12px;font-weight:700;color:#8a8a96;letter-spacing:-0.270px;">0/10 SPOTS SOLD</span>
<div class="b" style="left:1321px;top:243.0px;width:180px;height:8px;background:#dfe2ea;border-radius:4px;"></div>
<div class="b" style="left:1514px;top:220.0px;width:34px;height:34px;background:#25253b;border-radius:6px;opacity:.5;"></div>
<svg class="i" style="left:1523px;top:229.0px;color:#fff;" width="16" height="16" viewBox="0 0 24 24" fill="none" stroke="currentColor" stroke-width="2" stroke-linecap="round" stroke-linejoin="round"><circle cx="12" cy="12" r="1"/><circle cx="12" cy="5" r="1"/><circle cx="12" cy="19" r="1"/></svg>
<div class="b" style="left:913px;top:215px;width:110px;height:20px;border:1px solid #8a8a96;border-radius:10px;"></div>
<span class="t" style="left:918.5px;top:215.0px;line-height:20px;font-size:12px;font-weight:400;color:#8a8a96;letter-spacing:-0.482px;">SESSION 22 OF 27</span>
<span class="t" style="left:278px;top:299.1px;line-height:24px;font-size:15px;font-weight:700;color:#25253b;letter-spacing:normal;-webkit-text-stroke:0.35px currentColor;transform-origin:left center;transform:scaleX(1.0573);">Wednesday 11 February 2026</span>
<div class="b" style="left:278px;top:334px;width:1280px;height:1px;background:#e4e4ea;"></div>
<div class="b" style="left:278px;top:345px;width:1280px;height:66px;background:#fffbeb;border:1px solid #fcc640;border-left:4px solid #fb9a09;border-radius:8px;"></div>
<div class="b" style="left:290px;top:366.0px;width:20px;height:20px;border:2px solid #fb9a09;border-radius:4px;"></div>
<span class="t" style="left:332px;top:366.5px;line-height:24px;font-size:16px;font-weight:400;color:#25253b;letter-spacing:0.009px;">9:00am - 10:00am</span>
<span class="t" style="left:503.5px;top:355.0px;line-height:24px;font-size:16px;font-weight:700;color:#25253b;letter-spacing:-0.240px;">Yoga Classes</span>
<span class="t" style="left:503.5px;top:379.0px;line-height:24px;font-size:16px;font-weight:400;color:#6b6b7b;letter-spacing:0.016px;">New Floom Madrid, 28001</span>
<span class="t" style="right:350px;top:363.0px;line-height:18px;font-size:12px;font-weight:700;color:#25253b;letter-spacing:-0.270px;">0/20 SPOTS SOLD</span>
<div class="b" style="left:1321px;top:384.0px;width:180px;height:8px;background:#d3d4da;border-radius:4px;"></div>
<div class="b" style="left:1514px;top:361.0px;width:34px;height:34px;background:#25253b;border-radius:6px;"></div>
<svg class="i" style="left:1523px;top:370.0px;color:#fff;" width="16" height="16" viewBox="0 0 24 24" fill="none" stroke="currentColor" stroke-width="2" stroke-linecap="round" stroke-linejoin="round"><circle cx="12" cy="12" r="1"/><circle cx="12" cy="5" r="1"/><circle cx="12" cy="19" r="1"/></svg>
<div class="b" style="left:278px;top:419px;width:1280px;height:54px;background:#f5f8ff;border:1px solid #8ec5ff;border-left:4px solid #8ec5ff;border-radius:8px;"></div>
<div class="b" style="left:290px;top:434.0px;width:20px;height:20px;border:2px solid #8ec5ff;border-radius:4px;"></div>
<span class="t" style="left:332px;top:434.5px;line-height:24px;font-size:16px;font-weight:400;color:#25253b;letter-spacing:0.003px;">5:00pm - 6:30pm</span>
<span class="t" style="left:503.5px;top:435.0px;line-height:24px;font-size:16px;font-weight:700;color:#25253b;letter-spacing:-0.226px;">How to build your website from scratch</span>
<span class="t" style="right:350px;top:431.0px;line-height:18px;font-size:12px;font-weight:700;color:#25253b;letter-spacing:-0.270px;">0/25 SPOTS SOLD</span>
<div class="b" style="left:1321px;top:452.0px;width:180px;height:8px;background:#d3d4da;border-radius:4px;"></div>
<div class="b" style="left:1514px;top:429.0px;width:34px;height:34px;background:#25253b;border-radius:6px;"></div>
<svg class="i" style="left:1523px;top:438.0px;color:#fff;" width="16" height="16" viewBox="0 0 24 24" fill="none" stroke="currentColor" stroke-width="2" stroke-linecap="round" stroke-linejoin="round"><circle cx="12" cy="12" r="1"/><circle cx="12" cy="5" r="1"/><circle cx="12" cy="19" r="1"/></svg>
<span class="t" style="left:803.5px;top:435.0px;line-height:24px;font-size:16px;font-weight:400;color:#e11d48;letter-spacing:-0.613px;">ONLINE EVENT</span>
<span class="t" style="left:278px;top:502.1px;line-height:24px;font-size:15px;font-weight:700;color:#25253b;letter-spacing:normal;-webkit-text-stroke:0.35px currentColor;transform-origin:left center;transform:scaleX(1.0733);">Thursday 12 February 2026</span>
<div class="b" style="left:278px;top:537px;width:1280px;height:1px;background:#e4e4ea;"></div>
<div class="b" style="left:278px;top:548px;width:1280px;height:66px;background:#f0ecfd;border:1px solid #7c3aed;border-left:4px solid #6d28d9;border-radius:8px;"></div>
<div class="b" style="left:290px;top:569.0px;width:20px;height:20px;border:2px solid #6d28d9;border-radius:4px;"></div>
<span class="t" style="left:332px;top:569.5px;line-height:24px;font-size:16px;font-weight:400;color:#25253b;letter-spacing:0.003px;">9:00am - 9:50am</span>
<span class="t" style="left:503.5px;top:558.0px;line-height:24px;font-size:16px;font-weight:700;color:#25253b;letter-spacing:-0.224px;">Morning Yoga</span>
<span class="t" style="left:503.5px;top:582.0px;line-height:24px;font-size:16px;font-weight:400;color:#6b6b7b;letter-spacing:-0.046px;">New Floom, SW11 5AX</span>
<span class="t" style="right:350px;top:566.0px;line-height:18px;font-size:12px;font-weight:700;color:#25253b;letter-spacing:-0.270px;">0/15 SPOTS SOLD</span>
<div class="b" style="left:1321px;top:587.0px;width:180px;height:8px;background:#d3d4da;border-radius:4px;"></div>
<div class="b" style="left:1514px;top:564.0px;width:34px;height:34px;background:#25253b;border-radius:6px;"></div>
<svg class="i" style="left:1523px;top:573.0px;color:#fff;" width="16" height="16" viewBox="0 0 24 24" fill="none" stroke="currentColor" stroke-width="2" stroke-linecap="round" stroke-linejoin="round"><circle cx="12" cy="12" r="1"/><circle cx="12" cy="5" r="1"/><circle cx="12" cy="19" r="1"/></svg>
<div class="b" style="left:278px;top:622px;width:1280px;height:66px;background:#fef8f8;border:1px solid #ffc8d0;border-left:4px solid #f9718a;border-radius:8px;"></div>
<div class="b" style="left:290px;top:643.0px;width:20px;height:20px;border:2px solid #f9718a;border-radius:4px;"></div>
<span class="t" style="left:332px;top:643.5px;line-height:24px;font-size:16px;font-weight:400;color:#25253b;letter-spacing:0.085px;">11:00am - 12:00pm</span>
<span class="t" style="left:503.5px;top:632.0px;line-height:24px;font-size:16px;font-weight:700;color:#25253b;letter-spacing:-0.049px;">1-on-1 Meditation (Demo appointments)</span>
<span class="t" style="left:503.5px;top:656.0px;line-height:24px;font-size:16px;font-weight:400;color:#6b6b7b;letter-spacing:-0.046px;">New Floom, SW11 5AX</span>
<span class="t" style="right:350px;top:640.0px;line-height:18px;font-size:12px;font-weight:700;color:#25253b;letter-spacing:-0.473px;">EVENT FULL - 1</span>
<div class="b" style="left:1321px;top:661.0px;width:180px;height:8px;background:#f87085;border-radius:4px;"></div>
<div class="b" style="left:1514px;top:638.0px;width:34px;height:34px;background:#25253b;border-radius:6px;"></div>
<svg class="i" style="left:1523px;top:647.0px;color:#fff;" width="16" height="16" viewBox="0 0 24 24" fill="none" stroke="currentColor" stroke-width="2" stroke-linecap="round" stroke-linejoin="round"><circle cx="12" cy="12" r="1"/><circle cx="12" cy="5" r="1"/><circle cx="12" cy="19" r="1"/></svg>
<div class="b" style="left:278px;top:696px;width:1280px;height:66px;background:#fef8f8;border:1px solid #ffc8d0;border-left:4px solid #f9718a;border-radius:8px;"></div>
<div class="b" style="left:290px;top:717.0px;width:20px;height:20px;border:2px solid #f9718a;border-radius:4px;"></div>
<span class="t" style="left:332px;top:717.5px;line-height:24px;font-size:16px;font-weight:400;color:#25253b;letter-spacing:0.009px;">12:00pm - 1:00pm</span>
<span class="t" style="left:503.5px;top:706.0px;line-height:24px;font-size:16px;font-weight:700;color:#25253b;letter-spacing:-0.049px;">1-on-1 Meditation (Demo appointments)</span>
<span class="t" style="left:503.5px;top:730.0px;line-height:24px;font-size:16px;font-weight:400;color:#6b6b7b;letter-spacing:-0.046px;">New Floom, SW11 5AX</span>
<span class="t" style="right:350px;top:714.0px;line-height:18px;font-size:12px;font-weight:700;color:#25253b;letter-spacing:-0.473px;">EVENT FULL - 1</span>
<div class="b" style="left:1321px;top:735.0px;width:180px;height:8px;background:#f87085;border-radius:4px;"></div>
<div class="b" style="left:1514px;top:712.0px;width:34px;height:34px;background:#25253b;border-radius:6px;"></div>
<svg class="i" style="left:1523px;top:721.0px;color:#fff;" width="16" height="16" viewBox="0 0 24 24" fill="none" stroke="currentColor" stroke-width="2" stroke-linecap="round" stroke-linejoin="round"><circle cx="12" cy="12" r="1"/><circle cx="12" cy="5" r="1"/><circle cx="12" cy="19" r="1"/></svg>
<div class="b" style="left:278px;top:770px;width:1280px;height:66px;background:#fef8f8;border:1px solid #ffc8d0;border-left:4px solid #f9718a;border-radius:8px;"></div>
<div class="b" style="left:290px;top:791.0px;width:20px;height:20px;border:2px solid #f9718a;border-radius:4px;"></div>
<span class="t" style="left:332px;top:791.5px;line-height:24px;font-size:16px;font-weight:400;color:#25253b;letter-spacing:0.003px;">1:00pm - 2:00pm</span>
<span class="t" style="left:503.5px;top:780.0px;line-height:24px;font-size:16px;font-weight:700;color:#25253b;letter-spacing:-0.049px;">1-on-1 Meditation (Demo appointments)</span>
<span class="t" style="left:503.5px;top:804.0px;line-height:24px;font-size:16px;font-weight:400;color:#6b6b7b;letter-spacing:-0.046px;">New Floom, SW11 5AX</span>
<span class="t" style="right:350px;top:788.0px;line-height:18px;font-size:12px;font-weight:700;color:#25253b;letter-spacing:-0.473px;">EVENT FULL - 1</span>
<div class="b" style="left:1321px;top:809.0px;width:180px;height:8px;background:#f87085;border-radius:4px;"></div>
<div class="b" style="left:1514px;top:786.0px;width:34px;height:34px;background:#25253b;border-radius:6px;"></div>
<svg class="i" style="left:1523px;top:795.0px;color:#fff;" width="16" height="16" viewBox="0 0 24 24" fill="none" stroke="currentColor" stroke-width="2" stroke-linecap="round" stroke-linejoin="round"><circle cx="12" cy="12" r="1"/><circle cx="12" cy="5" r="1"/><circle cx="12" cy="19" r="1"/></svg>
<span class="t" style="left:278px;top:865.1px;line-height:24px;font-size:15px;font-weight:700;color:#25253b;letter-spacing:normal;-webkit-text-stroke:0.35px currentColor;transform-origin:left center;transform:scaleX(1.0683);">Friday 13 February 2026</span>
</div>
</body></html>
